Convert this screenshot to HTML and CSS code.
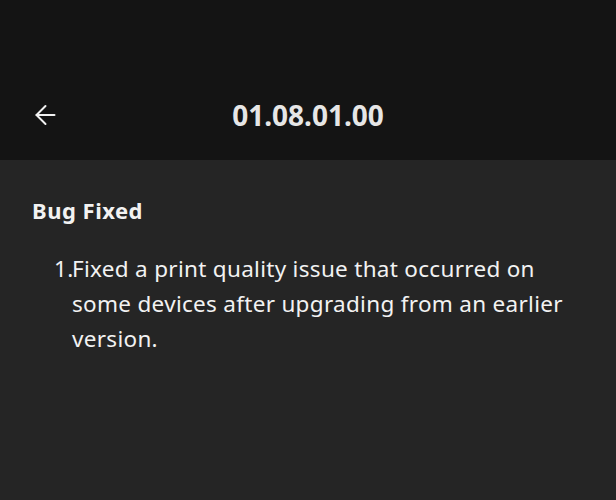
FILE: index.html
```html
<!DOCTYPE html>
<html lang="en">
<head>
<meta charset="utf-8">
<title>01.08.01.00</title>
<link rel="stylesheet" href="styles.css">
</head>
<body>
<div class="screen">
  <header class="topbar">
    <button class="back" aria-label="Back">
      <svg width="22" height="22" viewBox="0 0 22 22" fill="none" stroke="currentColor" stroke-width="2" stroke-linecap="round" stroke-linejoin="round">
        <path d="M20.5 11H2.5"/>
        <path d="M11.5 2L2.5 11L11.5 20"/>
      </svg>
    </button>
    <h1 class="title">01.08.01.00</h1>
    <span class="spacer"></span>
  </header>
  <main class="notes">
    <h2 class="section">Bug Fixed</h2>
    <ol class="items">
      <li><span class="num">1.</span><span class="text">Fixed a print quality issue that occurred on some devices after upgrading from an earlier version.</span></li>
    </ol>
  </main>
</div>
</body>
</html>
```
FILE: styles.css
```css
html, body {
  margin: 0;
  padding: 0;
  height: 100%;
  background: #252525;
}

.screen {
  display: flex;
  flex-direction: column;
  min-height: 100%;
}

.topbar {
  height: 160px;
  background: #141414;
  display: grid;
  grid-template-columns: 80px 1fr 80px;
  align-items: center;
  padding-top: 70px;
  box-sizing: border-box;
}

.back {
  background: none;
  border: 0;
  padding: 0;
  margin-left: 34px;
  width: 22px;
  height: 22px;
  color: #f2f2f2;
  display: flex;
}

.title {
  margin: 0;
  text-align: center;
  font-family: "Noto Sans", "Open Sans", sans-serif;
  font-weight: 700;
  font-size: 28px;
  color: #e6e6e6;
  line-height: 1;
}

.notes {
  flex: 1;
  padding: 34px 32px;
  color: #f2f2f2;
  font-family: "Noto Sans", "Open Sans", sans-serif;
}

.section {
  margin: 0;
  font-size: 22px;
  font-weight: 700;
  line-height: 32px;
  letter-spacing: 0.5px;
}

.items {
  list-style: none;
  margin: 25px 0 0;
  padding: 0 0 0 22px;
}

.items li {
  display: flex;
  font-size: 22.5px;
  line-height: 35px;
  letter-spacing: 0.3px;
}

.num {
  flex: none;
  width: 18px;
}

.text {
  flex: 1;
}
```
